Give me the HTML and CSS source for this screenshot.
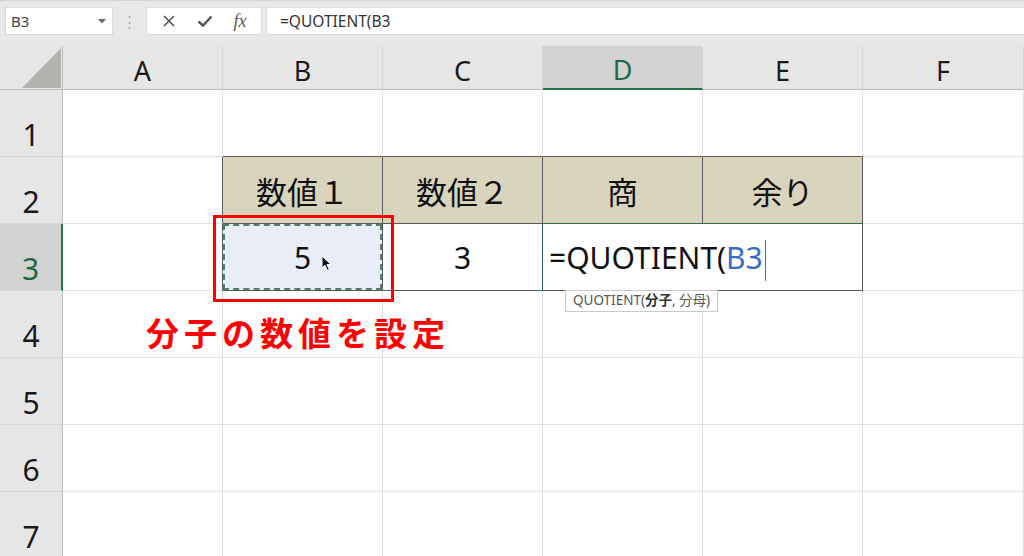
FILE: index.html
```html
<!DOCTYPE html>
<html lang="ja">
<head>
    <meta charset="UTF-8">
    <title>QUOTIENT</title>
    <link rel="stylesheet" href="styles.css">
</head>
<body>
    <div class="topbar">
        <div class="namebox">
            <span>B3</span>
            <svg width="8" height="5" viewBox="0 0 8 5"><path d="M0 0 L8 0 L4 4.5 Z" fill="#6a6a6a"/></svg>
        </div>
        <div class="sep">⋮</div>
        <div class="fnbtns">
            <svg width="14" height="14" viewBox="0 0 14 14"><path d="M2 2 L12 12 M12 2 L2 12" stroke="#555" stroke-width="1.6" fill="none"/></svg>
            <svg width="16" height="14" viewBox="0 0 16 14"><path d="M1.5 7.5 L6 11.5 L14.5 2.5" stroke="#555" stroke-width="2.4" fill="none"/></svg>
            <span class="fx">fx</span>
        </div>
        <div class="formula">=QUOTIENT(B3</div>
    </div>

    <div class="sheet">
        <!-- column headers -->
        <div class="hdr corner"><div class="tri"></div></div>
        <div class="hdr">A</div>
        <div class="hdr">B</div>
        <div class="hdr">C</div>
        <div class="hdr active">D</div>
        <div class="hdr">E</div>
        <div class="hdr">F</div>

        <!-- row 1 -->
        <div class="rh">1</div>
        <div class="cell"></div>
        <div class="cell bt"></div>
        <div class="cell bt"></div>
        <div class="cell bt"></div>
        <div class="cell bt"></div>
        <div class="cell"></div>

        <!-- row 2 -->
        <div class="rh">2</div>
        <div class="cell br"></div>
        <div class="cell tbl">数値１</div>
        <div class="cell tbl">数値２</div>
        <div class="cell tbl">商</div>
        <div class="cell tbl">余り</div>
        <div class="cell"></div>

        <!-- row 3 -->
        <div class="rh active">3</div>
        <div class="cell br"></div>
        <div class="cell val copied">
            5
            <svg class="pointer" width="12" height="17" viewBox="0 0 12 17"><path d="M1 1 L1 13 L4 10.2 L6.3 15.5 L8.3 14.6 L6 9.5 L10 9.5 Z" fill="#111" stroke="#fff" stroke-width="1"/></svg>
            <div class="mark"></div>
        </div>
        <div class="cell val">3</div>
        <div class="cell edit">
            =QUOTIENT(<span class="ref">B3</span><span class="caret"></span>
            <div class="tip">QUOTIENT(<b>分子</b>, 分母)</div>
        </div>
        <div class="cell"></div>

        <!-- row 4 -->
        <div class="rh">4</div>
        <div class="cell note-cell"><span class="note">分子の数値を設定</span></div>
        <div class="cell"></div>
        <div class="cell"></div>
        <div class="cell"></div>
        <div class="cell"></div>
        <div class="cell"></div>

        <!-- row 5 -->
        <div class="rh">5</div>
        <div class="cell"></div>
        <div class="cell"></div>
        <div class="cell"></div>
        <div class="cell"></div>
        <div class="cell"></div>
        <div class="cell"></div>

        <!-- row 6 -->
        <div class="rh">6</div>
        <div class="cell"></div>
        <div class="cell"></div>
        <div class="cell"></div>
        <div class="cell"></div>
        <div class="cell"></div>
        <div class="cell"></div>

        <!-- row 7 -->
        <div class="rh">7</div>
        <div class="cell"></div>
        <div class="cell"></div>
        <div class="cell"></div>
        <div class="cell"></div>
        <div class="cell"></div>
        <div class="cell"></div>
    </div>
</body>
</html>
```

FILE: styles.css
```css
body {
    margin: 0;
    width: 1024px;
    height: 556px;
    overflow: hidden;
    background-color: #ffffff;
    font-family: "Noto Sans", "Noto Sans CJK JP", sans-serif;
    color: #111;
}

/* formula bar */
.topbar {
    height: 46px;
    box-sizing: border-box;
    background-color: #e8e8e8;
    border-top: 1px solid #d4d4d4;
    padding: 6px 0 0 5px;
    display: flex;
    align-items: flex-start;
}

.namebox {
    width: 108px;
    height: 28px;
    box-sizing: border-box;
    background-color: #fff;
    border: 1px solid #dadada;
    display: flex;
    align-items: center;
    justify-content: space-between;
    padding: 0 6px 0 5px;
    font-size: 15px;
    color: #444;
}

.sep {
    width: 33px;
    height: 28px;
    display: flex;
    align-items: center;
    justify-content: center;
    color: #aaa;
    font-size: 15px;
}

.fnbtns {
    width: 116px;
    height: 28px;
    box-sizing: border-box;
    background-color: #fff;
    border: 1px solid #dadada;
    display: flex;
    align-items: center;
    justify-content: space-around;
    padding: 0 4px;
}

.fx {
    font-family: "Liberation Serif", serif;
    font-style: italic;
    font-size: 18px;
    color: #555;
}

.formula {
    flex: 1;
    height: 28px;
    box-sizing: border-box;
    margin-left: 4px;
    background-color: #fff;
    border: 1px solid #dadada;
    border-right: none;
    padding-left: 13px;
    display: flex;
    align-items: center;
    font-size: 15.5px;
    color: #333;
}

/* grid */
.sheet {
    display: grid;
    grid-template-columns: 63px repeat(5, 160px) 161px;
    grid-template-rows: 44px repeat(7, 67px);
}

.sheet > div {
    box-sizing: border-box;
    display: flex;
    justify-content: center;
    align-items: flex-end;
    line-height: 1;
}

.hdr {
    background-color: #e6e6e6;
    border-right: 1px solid #d6d6d6;
    border-bottom: 1px solid #bdbdbd;
    font-size: 27px;
    padding-bottom: 5px;
    color: #1a1a1a;
}

.hdr.corner {
    border-right: 1px solid #bdbdbd;
    padding: 0 1px 1px 0;
    justify-content: flex-end;
}

.tri {
    width: 39px;
    height: 40px;
    background-color: #b3b2ae;
    clip-path: polygon(100% 0, 100% 100%, 0 100%);
}

.hdr.active {
    background-color: #d2d2d2;
    border-bottom: 2px solid #217346;
    color: #1d6b44;
}

.rh {
    background-color: #e6e6e6;
    border-right: 1px solid #bdbdbd;
    border-bottom: 1px solid #d6d6d6;
    font-size: 30px;
    padding-bottom: 6px;
    color: #1a1a1a;
}

.rh.active {
    background-color: #d2d2d2;
    border-right: 2px solid #217346;
    color: #1d6b44;
}

.cell {
    border-right: 1px solid #e0e0e0;
    border-bottom: 1px solid #e0e0e0;
    font-size: 30px;
    padding-bottom: 17px;
}

.cell.bt {
    border-bottom-color: #5a5a5a;
}

.cell.br {
    border-right-color: #5a5a5a;
}

.cell.tbl {
    background-color: #d9d5bd;
    border-color: #5a5a5a;
    font-size: 31px;
    padding-bottom: 15px;
}

.cell.val {
    border-color: #5a5a5a;
}

.cell.copied {
    position: relative;
    background-color: #e9edf8;
}

.cell.copied::after {
    content: "";
    position: absolute;
    inset: 0 0 0 0;
    border: 2px dashed #4f7f67;
}

.pointer {
    position: absolute;
    left: 98px;
    top: 31px;
}

.mark {
    position: absolute;
    left: -10px;
    top: -9px;
    width: 181px;
    height: 87px;
    box-sizing: border-box;
    border: 3px solid #ff0000;
    z-index: 2;
}

/* cell being edited */
.cell.edit {
    grid-column: span 2;
    position: relative;
    justify-content: flex-start;
    padding-left: 6px;
    border-color: #5a5a5a;
    box-shadow: -1px 0 0 #2f6c4c, 0 -1px 0 #2f6c4c;
    background-color: #fff;
    z-index: 1;
}

.ref {
    color: #3a6cc2;
}

.caret {
    width: 1px;
    height: 41px;
    margin: 0 0 -8px 2px;
    background-color: #4b6f87;
}

.tip {
    position: absolute;
    left: 22px;
    top: 100%;
    height: 22px;
    box-sizing: border-box;
    border: 1px solid #c9c9c9;
    background-color: #fff;
    padding: 0 7px;
    display: flex;
    align-items: center;
    font-size: 13.5px;
    color: #555;
    white-space: nowrap;
}

.tip b {
    color: #333;
}

.note-cell {
    justify-content: flex-start !important;
    padding: 0 0 0 83px;
    align-items: center !important;
    white-space: nowrap;
}

.note {
    position: relative;
    z-index: 1;
    color: #ff0000;
    font-family: "Noto Sans CJK JP", sans-serif;
    font-weight: bold;
    font-size: 33px;
    letter-spacing: 5px;
    margin-top: 16px;
}
```
